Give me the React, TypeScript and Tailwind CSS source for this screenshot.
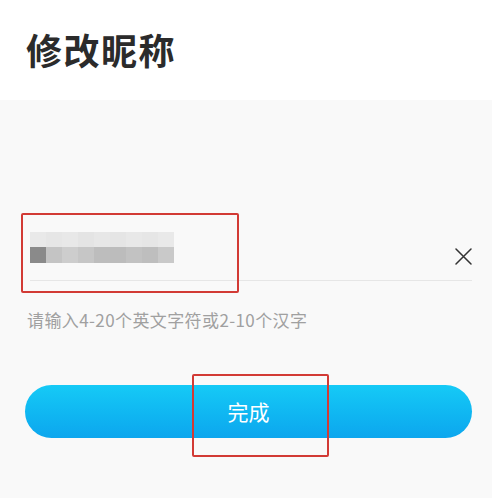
import React from "react";

const blurTop = ["#e9e9e9", "#e6e6e6", "#e8e8e8", "#e4e4e4", "#e7e7e7", "#e5e5e5", "#e8e8e8", "#e6e6e6", "#e9e9e9"];
const blurBottom = ["#8a8a8a", "#c4c4c4", "#cdcdcd", "#c6c6c6", "#bdbdbd", "#bcbcbc", "#c2c2c2", "#bebebe", "#c9c9c9"];

export default function App() {
  return (
    <div
      className="relative min-h-screen bg-[#f9f9f9]"
      style={{ fontFamily: '"Noto Sans CJK SC", "Noto Sans", sans-serif' }}
    >
      <header className="h-[100px] bg-white flex items-center pl-[26px]">
        <h1 className="text-[36px] font-bold text-[#2b2b2b] leading-none tracking-[1.5px] -mt-[2px]">
          修改昵称
        </h1>
      </header>

      <main className="pt-[120px]">
        <div className="ml-[30px] mr-[20px] h-[61px] border-b border-[#e6e6e6] flex items-start justify-between">
          <div className="mt-[12px] flex flex-col">
            <div className="flex h-[15px]">
              {blurTop.map((c, i) => (
                <div key={i} className="w-[16px] h-full" style={{ background: c }} />
              ))}
            </div>
            <div className="flex h-[16px]">
              {blurBottom.map((c, i) => (
                <div key={i} className="w-[16px] h-full" style={{ background: c }} />
              ))}
            </div>
          </div>
          <button className="mt-[28px] w-[17px] h-[17px] text-[#333]">
            <svg viewBox="0 0 17 17" width="17" height="17" fill="none" stroke="currentColor" strokeWidth="1.5" strokeLinecap="round">
              <path d="M1 1 L16 16 M16 1 L1 16" />
            </svg>
          </button>
        </div>

        <p className="ml-[27px] mt-[27px] text-[17px] leading-[24px] tracking-[0.4px] text-[#a0a0a0]">
          请输入4-20个英文字符或2-10个汉字
        </p>

        <button className="mt-[53px] ml-[25px] w-[447px] h-[53px] rounded-full bg-gradient-to-b from-[#16caf6] to-[#0da6ee] text-white text-[21px] flex items-center justify-center">
          完成
        </button>
      </main>

      {/* annotation boxes */}
      <div className="absolute left-[21px] top-[213px] w-[218px] h-[80px] border-2 border-[#d23a35] rounded-[2px]" />
      <div className="absolute left-[192px] top-[374px] w-[137px] h-[83px] border-2 border-[#d23a35] rounded-[2px]" />
    </div>
  );
}
